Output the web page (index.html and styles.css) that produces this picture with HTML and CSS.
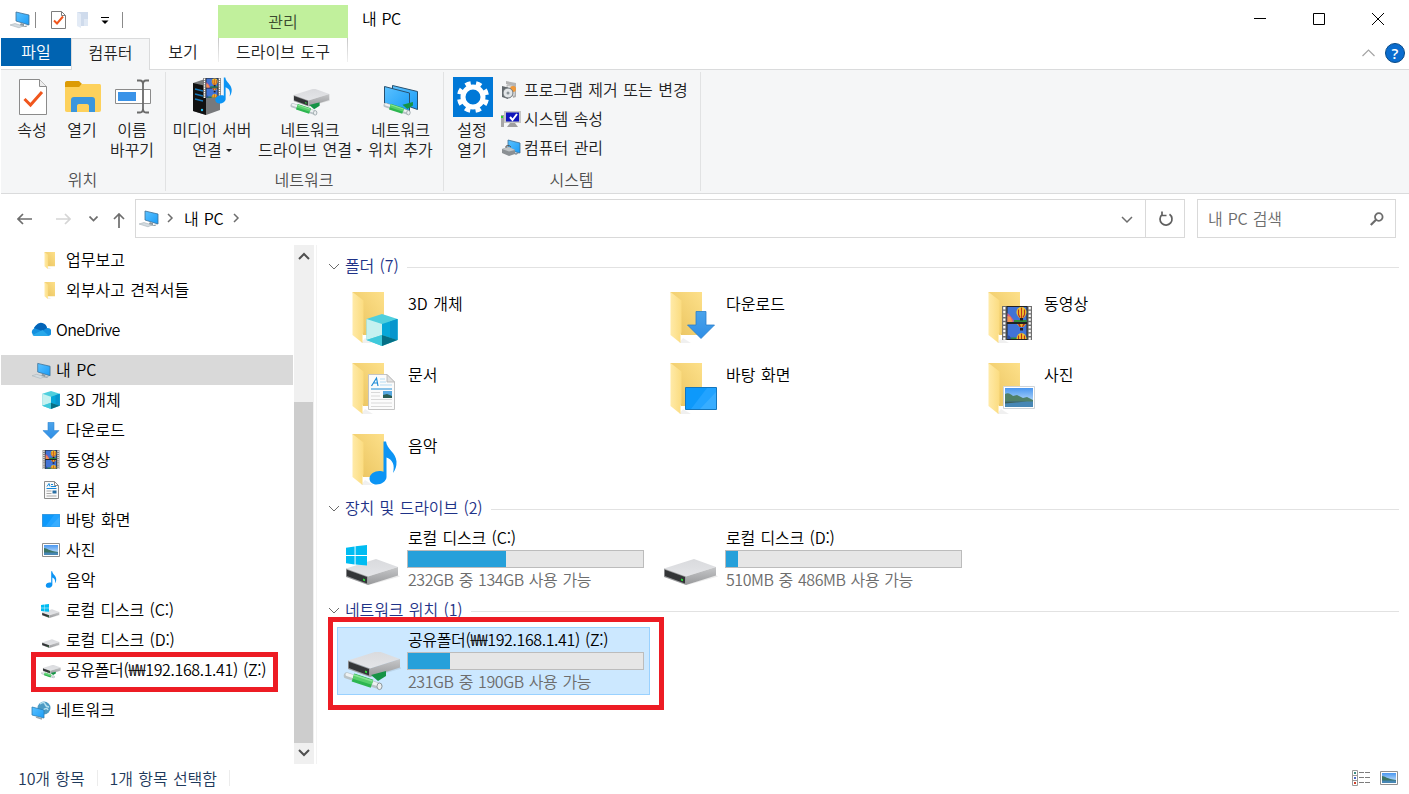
FILE: index.html
```html
<!DOCTYPE html>
<html lang="ko">
<head>
    <meta charset="UTF-8">
    <meta name="viewport" content="width=device-width, initial-scale=1.0">
    <title>내 PC</title>
    <link rel="stylesheet" href="styles.css">
</head>
<body>
    <!-- Icon sprite -->
    <svg class="sprite" width="0" height="0">
        <defs>
            <linearGradient id="g-folder" x1="0" y1="1" x2="1" y2="0">
                <stop offset="0" stop-color="#e9c25c"/><stop offset="1" stop-color="#fde08a"/>
            </linearGradient>
            <linearGradient id="g-flap" x1="0" y1="0" x2="1" y2="0">
                <stop offset="0" stop-color="#ffeaa8"/><stop offset="1" stop-color="#fbdc80"/>
            </linearGradient>
            <linearGradient id="g-screen" x1="0" y1="0" x2="1" y2="1">
                <stop offset="0" stop-color="#5cc2ff"/><stop offset="1" stop-color="#1a9cf7"/>
            </linearGradient>
            <linearGradient id="g-top" x1="0" y1="0" x2="0" y2="1">
                <stop offset="0" stop-color="#d9dadd"/><stop offset="1" stop-color="#e4e5e8"/>
            </linearGradient>
            <linearGradient id="g-side" x1="0" y1="0" x2="0" y2="1">
                <stop offset="0" stop-color="#c6c7c9"/><stop offset="1" stop-color="#98999b"/>
            </linearGradient>
            <linearGradient id="g-sky" x1="0" y1="0" x2="0" y2="1">
                <stop offset="0" stop-color="#4a97f0"/><stop offset="1" stop-color="#dcf0fb"/>
            </linearGradient>
            <linearGradient id="g-arrow" x1="0" y1="0" x2="0" y2="1">
                <stop offset="0" stop-color="#4aa3ea"/><stop offset="1" stop-color="#2f8ee6"/>
            </linearGradient>
        </defs>
        <symbol id="i-folder" viewBox="0 0 40 54">
            <path d="M9 51h12l-8-5z" fill="#000" opacity=".06"/>
            <path d="M.5 0H32v43H11z" fill="url(#g-folder)"/>
            <path d="M.5 0l11 8.500V40l-1 3v8L.5 43z" fill="url(#g-flap)"/>
        </symbol>
        <symbol id="i-cube" viewBox="0 0 32 32">
            <path d="M16 0l15.500 5v21L16 32 .5 26V5z" fill="#4fcfdd"/>
            <path d="M.5 5L16 10v11L.5 26z" fill="#c5f1f0"/>
            <path d="M16 10l15.500-5v21L16 21z" fill="#05a7d8"/>
            <path d="M24 7.500L31.500 5v21L24 23.500z" fill="#0795cd"/>
            <path d="M.5 26L16 21v11z" fill="#3fc9db"/>
            <path d="M16 21l15.500 5L16 32z" fill="#046f86"/>
        </symbol>
        <symbol id="i-down" viewBox="0 0 28 28">
            <path d="M9 .5h10V14h8.500L14 27.500.5 14H9z" fill="url(#g-arrow)" stroke="#2a7fcc" stroke-width=".8"/>
        </symbol>
        <symbol id="i-film" viewBox="0 0 30 34">
            <path d="M0 0h30v34H0z" fill="#6e6e6e"/>
            <path d="M2.300 1v33M27.700 1v33" stroke="#fff" stroke-width="2.200" stroke-dasharray="2.400 1.400"/>
            <path d="M4.500 0h21v34h-21z" fill="#222"/>
            <path d="M5.500 1h19v15h-19zM5.500 18h19v15h-19z" fill="#4173d6"/>
            <path d="M5.500 7l3 3 3 4v2h-6z" fill="#e0577c"/>
            <path d="M5.500 10l3 1 2 5h-5z" fill="#f0964e"/>
            <path d="M12 14h12.500v2H12zM5.500 31.500h19V33h-19z" fill="#2e8b3c"/>
            <path d="M14.500 6a5 5 0 0 1 10 0c0 3-2 5-3 6h-4c-1-1-3-3-3-6z" fill="#f4c92d"/>
            <path d="M16.500 3.500v5l1.500 3M19.500 1.500V12M22.500 3.500v5L21 11.500" fill="none" stroke="#b9311f" stroke-width="1.200"/>
            <path d="M18 12h3v2.500h-3z" fill="#201c22"/>
            <path d="M15 18h9l-2.500 3h-4z" fill="#e8b82a"/>
            <path d="M16 18h2l1 3h-1.500zM21 18h2l-2 3h-1z" fill="#b9311f"/>
            <path d="M18 22h3v2.500h-3z" fill="#201c22"/>
            <path d="M14.500 33a5 6 0 0 1 10 0z" fill="#f4c92d"/>
            <path d="M16.500 29.500V33M19.500 27.500V33M22.500 29.500V33" stroke="#b9311f" stroke-width="1.200"/>
            <path d="M5.500 29l2 1 2 3h-4z" fill="#2b4aa8"/>
        </symbol>
        <symbol id="i-doc" viewBox="0 0 27 36">
            <path d="M.5.5H19L26.500 8v27.500H.5z" fill="#fbfbfb" stroke="#c4c4c4"/>
            <path d="M19 .5V8h7.500z" fill="#e2e2e2" stroke="#b4b4b4" stroke-width=".8"/>
            <path d="M3.500 12L8.500 4l1.500 8M5 9h5M3 15h21" fill="none" stroke="#1f8bd6" stroke-width="1.200"/>
            <path d="M12 5h5M12 8h6M12 11h12" stroke="#b5dbf2"/>
            <path d="M3 18.500h9M3 22h9M3 25.500h21M3 29h21M3 32.500h21" stroke="#d9d9d9"/>
            <path d="M15 17h9v7h-9z" fill="#57a7df"/><path d="M15 21l4-1 5 2v2h-9z" fill="#2b5d54"/>
        </symbol>
        <symbol id="i-doc-sm" viewBox="0 0 15 18">
            <path d="M.5.5h10l4 4v13H.5z" fill="#fafafa" stroke="#8d8d8d"/>
            <path d="M10.500.5v4h4" fill="none" stroke="#8d8d8d"/>
            <path d="M3 5.500l2-3 1 3M7 3.500h2M7 5.500h5M2.500 7.500h10" fill="none" stroke="#1588d9"/>
            <path d="M2.500 10h5M2.500 12.500h5M2.500 15h10" stroke="#a9a9a9"/>
            <path d="M8.500 9.500h4v3h-4z" fill="#2b6fa3"/>
        </symbol>
        <symbol id="i-desktop" viewBox="0 0 32 23">
            <path d="M.5.5h31v22H.5z" fill="#0d99fb" stroke="#1476bd"/>
            <path d="M22 1h9v21H6z" fill="#22a3ff"/>
            <path d="M31 5v17H15z" fill="#38adff"/>
        </symbol>
        <symbol id="i-photo" viewBox="0 0 32 23">
            <path d="M.5.5h31v22H.5z" fill="#fff" stroke="#cfd4d8"/>
            <path d="M2 2h28v19H2z" fill="url(#g-sky)"/>
            <path d="M2 8c3-2 6 0 8 2l4-1 6 3 4-1 6 3v2H2z" fill="#4f8068"/>
            <path d="M2 15.500h28V21H2z" fill="#4787b5"/>
            <path d="M2 15.500h22l-22 2z" fill="#3b5f57"/>
        </symbol>
        <symbol id="i-photo-sm" viewBox="0 0 18 14">
            <path d="M.5.5h17v13H.5z" fill="#fff" stroke="#8f8f8f"/>
            <path d="M2 2h14v10H2z" fill="url(#g-sky)"/>
            <path d="M2 5c3 0 5 3 14 4v1H2z" fill="#3c7566"/>
            <path d="M2 9.500h14V12H2z" fill="#4787b5"/>
        </symbol>
        <symbol id="i-music" viewBox="0 0 28 44">
            <path d="M14.500.5H17c1 8 10 11 10.500 20 .2 5-1 8-3.500 11.500C26 24 24 19 17.500 16.500V36c0 4-5 7.500-10 7.500-4 0-7-2.500-7-6 0-5 6-8 11-7.500 1 0 2 .3 3 .7z" fill="#0c94f4"/>
        </symbol>
        <symbol id="i-drive" viewBox="0 0 54 28">
            <path d="M22 26.500l32-9-3-2z" fill="#000" opacity=".08"/>
            <path d="M0 9.500L30 0l22 8-30 9.500z" fill="url(#g-top)"/>
            <path d="M22 17.500L52 8v8.500L22 26z" fill="url(#g-side)"/>
            <path d="M0 9.500l22 8V26L0 18z" fill="#9a9b9d"/>
            <path d="M.8 10.800L21 18v6.500L.8 17z" fill="#333537"/>
            <path d="M17 19.500l2 .7v2l-2-.7z" fill="#2fdc3a"/>
        </symbol>
        <symbol id="i-winlogo" viewBox="0 0 22 22">
            <path d="M0 3l9-1.500V10.500H0zM10 1.300L22 0v10.500H10zM0 11.500h9v9L0 19.200zM10 11.500h12V21.500L10 20.500z" fill="#00bcf2"/>
        </symbol>
        <symbol id="i-pipe" viewBox="0 0 46 20">
            <path d="M28 4l15-4v5l-8 5z" fill="#159345"/>
            <path d="M4 4.500l32 10.500" stroke="#b9c3c7" stroke-width="6.500" stroke-linecap="round"/>
            <path d="M4 3.500l32 10.500" stroke="#eef2f3" stroke-width="3" stroke-linecap="round"/>
            <ellipse cx="36.500" cy="15.300" rx="2.500" ry="3.300" fill="#eceff0" stroke="#8e9a9f"/>
            <path d="M10 6.500l19 6.200" stroke="#2db650" stroke-width="8.500"/>
            <path d="M10.500 5.500l19 6.200" stroke="#58d06c" stroke-width="4.500"/>
            <path d="M11 4l18.500 6" stroke="#8be596" stroke-width="1.500"/>
        </symbol>
        <symbol id="i-netdrive" viewBox="0 0 58 40">
            <use href="#i-drive" x="5" y="-1" width="54" height="28"/>
            <use href="#i-pipe" x="0" y="19" width="46" height="20"/>
        </symbol>
        <symbol id="i-pc" viewBox="0 0 20 18">
            <path d="M6 1l13 3v10L6 10z" fill="url(#g-screen)" stroke="#3c6f95" stroke-width=".8"/>
            <path d="M11 12l3 1v2l4-.5-2 1.500-7-1z" fill="#8e9aa2"/>
            <path d="M0 14l5-1.500 8 2.500-4 1.800z" fill="#d3dbe0" stroke="#a7b2b9" stroke-width=".6"/>
        </symbol>
        <symbol id="i-check" viewBox="0 0 28 36">
            <path d="M.5.5h20l7 7v28H.5z" fill="#fff" stroke="#8b8b8b"/>
            <path d="M20.500.5v7h7" fill="#eee" stroke="#8b8b8b"/>
            <path d="M5.500 20l6 6L23 13" fill="none" stroke="#f0561d" stroke-width="3"/>
        </symbol>
        <symbol id="i-check-sm" viewBox="0 0 15 18">
            <path d="M.5.5h10l4 4v13H.5z" fill="#fff" stroke="#7d7d7d"/>
            <path d="M10.500.5v4h4" fill="none" stroke="#7d7d7d"/>
            <path d="M3 9.500l3 3 6-7" fill="none" stroke="#f0561d" stroke-width="2"/>
        </symbol>
        <symbol id="i-chev" viewBox="0 0 12 8">
            <path d="M1 1l5 5 5-5" fill="none" stroke="currentColor"/>
        </symbol>
    </svg>

    <div class="window">
        <header class="titlebar">
            <div class="quick-access">
                <svg class="qa-pc" width="20" height="18"><use href="#i-pc"/></svg>
                <span class="qa-sep"></span>
                <svg class="qa-check" width="15" height="18"><use href="#i-check-sm"/></svg>
                <svg class="qa-folder" width="13" height="18" viewBox="0 0 13 18"><path d="M1 1h11v14H4z" fill="#cfdbec"/><path d="M8 8h4v7H8z" fill="#dfe8f4"/><path d="M1 1l4 2v14l-4-2z" fill="#e3ebf6"/></svg>
                <svg class="qa-more" width="8" height="8" viewBox="0 0 8 8"><path d="M0 .5h8" stroke="#000"/><path d="M.5 3.500h7L4 7z"/></svg>
                <span class="qa-sep"></span>
            </div>
            <div class="context-title">관리</div>
            <h1 class="window-title">내 PC</h1>
            <div class="window-buttons">
                <svg width="12" height="12" viewBox="0 0 12 12"><path d="M0 5.500h12"/></svg>
                <svg width="12" height="12" viewBox="0 0 12 12"><path d="M.5.5h11v11H.5z"/></svg>
                <svg width="12" height="12" viewBox="0 0 12 12"><path d="M0 0l12 12M12 0L0 12"/></svg>
            </div>
        </header>

        <nav class="tabs">
            <a class="tab tab-file">파일</a>
            <a class="tab tab-active">컴퓨터</a>
            <a class="tab tab-view">보기</a>
            <a class="tab tab-context">드라이브 도구</a>
            <div class="tabs-end">
                <svg class="collapse" width="13" height="8" viewBox="0 0 13 8"><path d="M.5 7l6-6 6 6" fill="none" stroke="#a5a5a5" stroke-width="1.200"/></svg>
                <span class="help">?</span>
            </div>
        </nav>

        <section class="ribbon">
            <div class="group group-location">
                <div class="group-items">
                    <div class="big-btn">
                        <svg width="40" height="40" viewBox="0 0 40 40"><use href="#i-check" x="7" y="2" width="28" height="36"/></svg>
                        <span>속성</span>
                    </div>
                    <div class="big-btn">
                        <svg width="40" height="40" viewBox="0 0 40 40">
                            <path d="M3 6c0-1 .5-2 2-2h12l3 3-3 4H3z" fill="#dc9b05"/>
                            <path d="M3 10h14l3-3h17c1.500 0 2 .5 2 2v24c0 1-.5 2-2 2H5c-1.500 0-2-1-2-2z" fill="#fdd15c"/>
                            <path d="M9 35V23c0-2 1-3 3-3h18c2 0 3 1 3 3v12h-6v-6c0-1-.5-2-2-2h-8c-1.500 0-2 1-2 2v6z" fill="#3a96dd"/>
                        </svg>
                        <span>열기</span>
                    </div>
                    <div class="big-btn">
                        <svg width="40" height="40" viewBox="0 0 40 40">
                            <path d="M3.500 12.500h35v14h-35z" fill="#fff" stroke="#8b8b8b"/>
                            <path d="M6 15h18v9H6z" fill="#3a93e8"/>
                            <path d="M25 3.500h3q3 0 3 4v24q0 4-3 4h-3M37 3.500h-3q-3 0-3 4v24q0 4 3 4h3" fill="none" stroke="#6b6b6b" stroke-width="1.800"/>
                        </svg>
                        <span>이름<br>바꾸기</span>
                    </div>
                </div>
                <div class="group-name">위치</div>
            </div>
            <div class="group group-network">
                <div class="group-items">
                    <div class="big-btn">
                        <svg width="40" height="40" viewBox="0 0 40 40">
                            <path d="M1 6l12-4 15 3v28l-14 5L1 34z" fill="#77797c"/>
                            <path d="M1 6l13 3v29L1 34z" fill="#111"/>
                            <path d="M3 12l8 2M3 17l8 2M3 22l8 2" stroke="#1677b8" stroke-width="1.500"/>
                            <circle cx="10" cy="33" r="1.200" fill="#28c8ff"/>
                            <use href="#i-film" x="11" y="1" width="18" height="20"/>
                            <use href="#i-music" x="23" y="0" width="17" height="27"/>
                        </svg>
                        <span>미디어 서버<br>연결<i class="drop"></i></span>
                    </div>
                    <div class="big-btn">
                        <svg width="40" height="40" viewBox="0 0 40 40"><use href="#i-netdrive" x="0" y="12" width="40" height="28"/></svg>
                        <span>네트워크<br>드라이브 연결<i class="drop"></i></span>
                    </div>
                    <div class="big-btn">
                        <svg width="40" height="40" viewBox="0 0 40 40">
                            <path d="M11.500 8.500l25 6v18l-25-9z" fill="url(#g-screen)" stroke="#27506f"/>
                            <path d="M3.500 9.500l25 6.500v18l-25-8z" fill="url(#g-screen)" stroke="#27506f"/>
                            <use href="#i-pipe" x="2" y="25" width="32" height="14"/>
                        </svg>
                        <span>네트워크<br>위치 추가</span>
                    </div>
                </div>
                <div class="group-name">네트워크</div>
            </div>
            <div class="group group-system">
                <div class="group-items">
                    <div class="big-btn">
                        <svg width="40" height="40" viewBox="0 0 40 40">
                            <path d="M0 0h40v40H0z" fill="#0078d7"/>
                            <circle cx="20" cy="20" r="10" fill="none" stroke="#fff" stroke-width="5"/>
                            <circle cx="20" cy="20" r="13.800" fill="none" stroke="#fff" stroke-width="4.500" stroke-dasharray="5.400 5.438" stroke-dashoffset="-2.700"/>
                        </svg>
                        <span>설정<br>열기</span>
                    </div>
                    <ul class="small-btns">
                        <li>
                            <svg width="20" height="20" viewBox="0 0 20 20"><path d="M5 1l10 2v14l-3 1V6L5 4z" fill="#b5b5b5"/><path d="M6 5l8 2v9H6z" fill="#e9e9e9" stroke="#999" stroke-width=".6"/><circle cx="12" cy="9" r="3" fill="#f0993a"/><path d="M1 6l6 1.500V19l-6-2z" fill="#62686c"/><circle cx="7" cy="13" r="5" fill="#e3e6e8" stroke="#6c7478"/><circle cx="7" cy="13" r="1.500" fill="#8b9499"/></svg>
                            프로그램 제거 또는 변경
                        </li>
                        <li>
                            <svg width="20" height="20" viewBox="0 0 20 20"><path d="M0 6h3v12H0z" fill="#a7a7a7"/><path d="M0 7h2v2H0z" fill="#2bd32b"/><path d="M3 2h17v12H3z" fill="#c6c6c6"/><path d="M5 3.500h13v9H5z" fill="#1016bb"/><path d="M9 8l2.500 3L16 5" fill="none" stroke="#fff" stroke-width="2"/><path d="M9 14h5l3 4H6z" fill="#9f9f9f"/></svg>
                            시스템 속성
                        </li>
                        <li>
                            <svg width="20" height="20" viewBox="0 0 20 20"><path d="M7 2l12 3v10L7 12z" fill="url(#g-screen)" stroke="#3c6f95" stroke-width=".8"/><path d="M12 15h6l-3 2z" fill="#8e9aa2"/><path d="M1 11l7-2 6 3v4l-6 2-7-3z" fill="#8b9094"/><path d="M1 11l7-2 6 3-6 1.500z" fill="#bfc4c7"/><path d="M5 10V8l3-.5L10 9" fill="none" stroke="#555"/></svg>
                            컴퓨터 관리
                        </li>
                    </ul>
                </div>
                <div class="group-name">시스템</div>
            </div>
        </section>

        <div class="addressbar">
            <div class="nav-arrows">
                <svg width="15" height="12" viewBox="0 0 15 12"><path d="M15 6H1M6 1L1 6l5 5"/></svg>
                <svg class="off" width="15" height="12" viewBox="0 0 15 12"><path d="M0 6h14M9 1l5 5-5 5"/></svg>
                <svg class="recent" width="9" height="6" viewBox="0 0 9 6"><path d="M.5.5l4 4 4-4"/></svg>
                <svg class="up" width="12" height="15" viewBox="0 0 12 15"><path d="M6 15V1M1 6l5-5 5 5"/></svg>
            </div>
            <div class="path">
                <svg width="20" height="18"><use href="#i-pc"/></svg>
                <svg class="crumb" width="7" height="10" viewBox="0 0 7 10"><path d="M1 1l4 4-4 4"/></svg>
                <span>내 PC</span>
                <svg class="crumb" width="7" height="10" viewBox="0 0 7 10"><path d="M1 1l4 4-4 4"/></svg>
                <svg class="path-drop" width="12" height="8" viewBox="0 0 12 8"><path d="M1 1l5 5 5-5"/></svg>
            </div>
            <div class="refresh">
                <svg width="16" height="16" viewBox="0 0 16 16"><path d="M11.500 3.200A6 6 0 1 1 4 3.600M4 .5v4h4.500" fill="none" stroke="#5f5f5f" stroke-width="1.700"/></svg>
            </div>
            <div class="search">
                <span>내 PC 검색</span>
                <svg width="14" height="14" viewBox="0 0 14 14"><circle cx="8.800" cy="5" r="3.800" fill="none" stroke="#6c6c6c" stroke-width="1.800"/><path d="M6 7.800L.8 13" stroke="#6c6c6c" stroke-width="2.200"/></svg>
            </div>
        </div>

        <main class="body">
            <aside class="sidebar">
                <ul class="tree">
                    <li class="sub"><svg viewBox="0 0 20 20"><use href="#i-folder" x="3" y="2" width="14" height="18"/></svg><span>업무보고</span></li>
                    <li class="sub"><svg viewBox="0 0 20 20"><use href="#i-folder" x="3" y="2" width="14" height="18"/></svg><span>외부사고 견적서들</span></li>
                    <li class="root"><svg viewBox="0 0 20 20"><path d="M4 16a4 4 0 0 1-1-7.500A5 5 0 0 1 9 4.500 6 6 0 0 1 16 8a4 4 0 0 1 1 8z" fill="#1490df"/><path d="M5 5.500A6 6 0 0 1 16 8l-5 3-8-3z" fill="#0364b8"/><path d="M1.500 15l10-5 6 5.500-1 .5H4q-1.500 0-2.500-1z" fill="#28a8ea"/></svg><span class="latin">OneDrive</span></li>
                    <li class="root selected"><svg viewBox="0 0 20 20"><use href="#i-pc" x="1" y="2" width="19" height="18"/></svg><span>내 PC</span></li>
                    <li class="sub"><svg viewBox="0 0 20 20"><use href="#i-cube" x="1" y="1" width="18" height="18"/></svg><span>3D 개체</span></li>
                    <li class="sub"><svg viewBox="0 0 20 20"><use href="#i-down" x="1.500" y="2" width="17" height="17"/></svg><span>다운로드</span></li>
                    <li class="sub"><svg viewBox="0 0 20 20"><use href="#i-film" x="1" y="0" width="18" height="19" /></svg><span>동영상</span></li>
                    <li class="sub"><svg viewBox="0 0 20 20"><use href="#i-doc-sm" x="3" y="1" width="15" height="18"/></svg><span>문서</span></li>
                    <li class="sub"><svg viewBox="0 0 20 20"><use href="#i-desktop" x="1" y="4" width="18" height="13"/></svg><span>바탕 화면</span></li>
                    <li class="sub"><svg viewBox="0 0 20 20"><use href="#i-photo-sm" x="1" y="3" width="18" height="14"/></svg><span>사진</span></li>
                    <li class="sub"><svg viewBox="0 0 20 20"><use href="#i-music" x="4" y="1" width="12" height="17"/></svg><span>음악</span></li>
                    <li class="sub"><svg viewBox="0 0 20 20"><use href="#i-drive" x="1" y="9" width="18" height="10"/><use href="#i-winlogo" x="0" y="4" width="8" height="8"/></svg><span class="disk">로컬 디스크 (C:)</span></li>
                    <li class="sub"><svg viewBox="0 0 20 20"><use href="#i-drive" x="1" y="9" width="18" height="10"/></svg><span class="disk">로컬 디스크 (D:)</span></li>
                    <li class="sub marked"><svg viewBox="0 0 20 20"><use href="#i-netdrive" x="0" y="5" width="20" height="14"/></svg><span class="share">공유폴더(₩₩192.168.1.41) (Z:)</span></li>
                    <li class="root"><svg viewBox="0 0 20 20"><circle cx="13" cy="8" r="6.500" fill="#4d9bc4"/><path d="M9 4q4-3 5 0t4 3M12 10q4-3 5 0" fill="none" stroke="#b5e0ef" stroke-width="1.500"/><path d="M1 7l12 3v8L1 15z" fill="url(#g-screen)" stroke="#2b7fb5" stroke-width=".8"/><path d="M5 17l6 2" stroke="#9aa6ad" stroke-width="1.500"/></svg><span>네트워크</span></li>
                </ul>
                <div class="scrollbar">
                    <svg class="flip" width="12" height="8"><use href="#i-chev"/></svg>
                    <div class="thumb"></div>
                    <svg width="12" height="8"><use href="#i-chev"/></svg>
                </div>
            </aside>

            <section class="content">
                <h2 class="section-title"><svg width="12" height="8"><use href="#i-chev"/></svg>폴더 (7)</h2>
                <div class="tiles folders">
                    <div class="tile"><svg viewBox="0 0 71 68"><use href="#i-folder" x="15" y="2" width="40" height="54"/><use href="#i-cube" x="29" y="24" width="32" height="32"/></svg><span>3D 개체</span></div>
                    <div class="tile"><svg viewBox="0 0 71 68"><use href="#i-folder" x="15" y="2" width="40" height="54"/><use href="#i-down" x="32" y="21" width="28" height="28"/></svg><span>다운로드</span></div>
                    <div class="tile"><svg viewBox="0 0 71 68"><use href="#i-folder" x="15" y="2" width="40" height="54"/><use href="#i-film" x="29" y="16" width="30" height="34"/></svg><span>동영상</span></div>
                    <div class="tile"><svg viewBox="0 0 71 68"><use href="#i-folder" x="15" y="2" width="40" height="54"/><use href="#i-doc" x="31" y="13" width="27" height="36"/></svg><span>문서</span></div>
                    <div class="tile"><svg viewBox="0 0 71 68"><use href="#i-folder" x="15" y="2" width="40" height="54"/><use href="#i-desktop" x="30" y="26" width="32" height="23"/></svg><span>바탕 화면</span></div>
                    <div class="tile"><svg viewBox="0 0 71 68"><use href="#i-folder" x="15" y="2" width="40" height="54"/><use href="#i-photo" x="30" y="25" width="32" height="23"/></svg><span>사진</span></div>
                    <div class="tile"><svg viewBox="0 0 71 68"><use href="#i-folder" x="15" y="2" width="40" height="54"/><use href="#i-music" x="32" y="9" width="28" height="44"/></svg><span>음악</span></div>
                </div>

                <h2 class="section-title"><svg width="12" height="8"><use href="#i-chev"/></svg>장치 및 드라이브 (2)</h2>
                <div class="tiles">
                    <div class="tile">
                        <svg viewBox="0 0 71 68"><use href="#i-drive" x="9" y="34" width="54" height="28"/><use href="#i-winlogo" x="9" y="20" width="21" height="21"/></svg>
                        <div class="drive">
                            <span class="disk">로컬 디스크 (C:)</span>
                            <div class="meter"><div style="width: 41.800%"></div></div>
                            <small>232GB 중 134GB 사용 가능</small>
                        </div>
                    </div>
                    <div class="tile">
                        <svg viewBox="0 0 71 68"><use href="#i-drive" x="9" y="34" width="54" height="28"/></svg>
                        <div class="drive">
                            <span class="disk">로컬 디스크 (D:)</span>
                            <div class="meter"><div style="width: 5%"></div></div>
                            <small>510MB 중 486MB 사용 가능</small>
                        </div>
                    </div>
                </div>

                <h2 class="section-title">
                    <svg width="12" height="8"><use href="#i-chev"/></svg>네트워크 위치 (1)
                </h2>
                <div class="tiles">
                    <div class="tile selected marked">
                        <svg viewBox="0 0 71 68"><use href="#i-netdrive" x="6" y="25" width="58" height="40"/></svg>
                        <div class="drive">
                            <span class="share">공유폴더(₩₩192.168.1.41) (Z:)</span>
                            <div class="meter"><div style="width: 18%"></div></div>
                            <small>231GB 중 190GB 사용 가능</small>
                        </div>
                    </div>
                </div>
            </section>
        </main>

        <footer class="statusbar">
            <span>10개 항목</span>
            <span>1개 항목 선택함</span>
            <div class="view-modes">
                <svg width="18" height="16" viewBox="0 0 18 16"><path d="M.5.500h5v15h-5zM.5 5.500h5M.5 10.500h5" fill="none" stroke="#9a9a9a"/><path d="M2 2h2v2H2z" fill="#3d8c84"/><path d="M2 7h2v2H2z" fill="#4b66c4"/><path d="M2 12h2v2H2z" fill="#d0402b"/><path d="M7 2.500h5M13 2.500h5M7 7.500h5M13 7.500h5M7 12.500h5M13 12.500h5" stroke="#7d7d7d"/></svg>
                <svg width="18" height="14"><use href="#i-photo-sm"/></svg>
            </div>
        </footer>
    </div>
</body>
</html>
```
FILE: styles.css
```css
*,
*::after {
    margin: 0;
    padding: 0;
    box-sizing: border-box;
}

body {
    font-family: 'Noto Sans CJK KR', sans-serif;
    font-size: 16px;
    font-weight: 350;
    line-height: 20px;
    word-spacing: 1px;
    color: #000;
    background: #fff;
    overflow: hidden;
}

ul {
    list-style: none;
}

svg {
    display: block;
    flex: none;
}

.sprite {
    position: absolute;
}

.window {
    display: flex;
    flex-direction: column;
    width: 1409px;
    height: 794px;
    padding-left: 1px;
    white-space: nowrap;
}

/* Title bar */
.titlebar {
    display: flex;
    height: 38px;
}

.quick-access {
    display: flex;
    align-items: center;
    width: 217px;
    padding: 1px 0 0 9px;
}

.qa-sep {
    width: 1px;
    height: 16px;
    margin-left: 5px;
    background: #8a8a8a;
}

.qa-check {
    margin-left: 15px;
}

.qa-folder {
    margin-left: 10px;
}

.qa-more {
    margin: 2px 12px 0;
}

.qa-more + .qa-sep {
    margin-left: 1px;
}

.context-title {
    width: 130px;
    margin-top: 5px;
    background: #c1f09c;
    color: #3b4a2f;
    text-align: center;
    line-height: 32px;
}

.window-title {
    margin-left: 14px;
    font-size: 16px;
    font-weight: 350;
    letter-spacing: -.4px;
    line-height: 37px;
}

.window-buttons {
    display: flex;
    align-items: center;
    gap: 47px;
    margin-left: auto;
    padding-right: 25px;
}

.window-buttons path {
    fill: none;
    stroke: #000;
}

/* Ribbon tabs */
.tabs {
    display: flex;
    height: 32px;
    border-bottom: 1px solid #dadbdc;
}

.tab {
    text-align: center;
    line-height: 26px;
    color: #222;
}

.tab-file {
    width: 70px;
    height: 28px;
    background: #0063b1;
    color: #fff;
}

.tab-active {
    width: 79px;
    height: 32px;
    border: 1px solid #dadbdc;
    border-bottom: 0;
    background: #f5f6f7;
}

.tab-view {
    width: 68px;
    padding-right: 2px;
}

.tab-context {
    width: 130px;
    height: 24px;
    border: solid;
    border-width: 0 1px;
    border-image: linear-gradient(#c4c4c4, #f2f2f2) 1;
}

.tabs-end {
    display: flex;
    align-items: center;
    margin-left: auto;
    padding: 0 4px 2px 0;
    gap: 10px;
}

.help {
    width: 20px;
    height: 20px;
    border: 1px solid #084a86;
    border-radius: 50%;
    background: #0a6cce;
    color: #fff;
    font: 600 15px/18px 'Open Sans', sans-serif;
    text-align: center;
}

/* Ribbon */
.ribbon {
    display: flex;
    height: 124px;
    padding-top: 2px;
    background: #f5f6f7;
    border-bottom: 1px solid #dadbdc;
    color: #222;
}

.group {
    height: 119px;
    padding-top: 5px;
    border-right: 1px solid #e1e2e3;
}

.group-location {
    width: 165px;
}

.group-network {
    width: 278px;
}

.group-system {
    width: 257px;
}

.group-items {
    display: flex;
    height: 92px;
}

.big-btn {
    display: flex;
    flex-direction: column;
    align-items: center;
    gap: 2px;
    width: 50px;
    text-align: center;
}

.group-location .big-btn:first-child {
    margin-left: 6px;
}

.group-network .big-btn:first-child {
    width: 92px;
}

.group-network .big-btn:nth-child(2) {
    width: 104px;
}

.group-network .big-btn:nth-child(3) {
    width: 77px;
}

.group-system .big-btn {
    margin-left: 4px;
}

.group-system .big-btn span {
    margin-right: 2px;
}

.drop {
    display: inline-block;
    margin-left: 4px;
    vertical-align: 4px;
    border: 3.500px solid transparent;
    border-top-color: #222;
    border-bottom: 0;
}

.small-btns {
    margin: -3px 0 0 3px;
}

.small-btns li {
    display: flex;
    align-items: center;
    gap: 3px;
    height: 29px;
}

.small-btns svg {
    margin-top: 2px;
}

.group-name {
    padding-right: 1px;
    text-align: center;
    color: #4f4f4f;
}

/* Address bar */
.addressbar {
    display: flex;
    height: 51px;
    padding-top: 5px;
}

.addressbar path {
    fill: none;
}

.nav-arrows {
    display: flex;
    align-items: center;
    width: 134px;
    height: 40px;
    padding-left: 16px;
}

.nav-arrows path {
    stroke: #6d6d6d;
    stroke-width: 1.700;
}

.nav-arrows .off {
    margin-left: 24px;
}

.nav-arrows .off path {
    stroke: #d5d5d5;
}

.nav-arrows .recent {
    margin-left: 18px;
}

.nav-arrows .up {
    margin: 2px 0 0 15px;
}

.path {
    display: flex;
    align-items: center;
    width: 1011px;
    height: 39px;
    padding-left: 3px;
    border: 1px solid #d9d9d9;
}

.path span,
.search span {
    padding-bottom: 2px;
    letter-spacing: -.2px;
}

.crumb {
    margin: 0 10px 2px 8px;
}

.path span + .crumb {
    margin-left: 9px;
}

.crumb path,
.path-drop path {
    stroke: #6d6d6d;
    stroke-width: 1.500;
}

.path-drop {
    margin: 3px 12px 0 auto;
}

.refresh {
    display: flex;
    align-items: center;
    justify-content: center;
    width: 39px;
    height: 39px;
    padding-left: 2px;
    border: 1px solid #d9d9d9;
    border-left: 0;
}

.search {
    display: flex;
    align-items: center;
    justify-content: space-between;
    width: 199px;
    height: 39px;
    margin-left: 12px;
    padding: 0 11px 0 10px;
    border: 1px solid #d9d9d9;
    color: #6d6d6d;
}

/* Sidebar */
.body {
    display: flex;
    height: 519px;
}

.sidebar {
    display: flex;
    width: 316px;
    border-right: 1px solid #f3f3f3;
}

.tree {
    width: 292px;
    margin-right: 1px;
}

.tree li {
    display: flex;
    align-items: center;
    position: relative;
    height: 30px;
}

.tree svg {
    width: 20px;
    height: 20px;
    margin-right: 5px;
}

.tree span {
    padding-bottom: 2px;
}

.tree .sub {
    padding-left: 40px;
}

.tree .root {
    margin: 10px 0 0;
    padding-left: 30px;
}

.tree .selected {
    background: #d9d9d9;
}

.tree .latin {
    letter-spacing: -.6px;
}

.disk {
    letter-spacing: -.15px;
}

.share {
    letter-spacing: -.36px;
}

.scrollbar {
    display: flex;
    flex-direction: column;
    align-items: center;
    width: 20px;
    padding: 7px 0;
    background: #f0f0f0;
    color: #505050;
}

.scrollbar svg {
    margin-right: 1px;
    stroke-width: 2;
}

.flip {
    transform: scaleY(-1);
}

.thumb {
    width: 19px;
    height: 341px;
    margin: auto 1px 6px 0;
    background: #cdcdcd;
}

/* File list */
.content {
    flex: 1;
    padding: 11px 10px 0 11px;
}

.section-title {
    display: flex;
    align-items: center;
    height: 22px;
    padding-bottom: 4px;
    font-size: 16px;
    font-weight: 350;
    letter-spacing: -.1px;
    color: #1e3287;
}

.section-title svg {
    margin: 4px 5px 0 0;
    color: #6b6b6b;
}

.section-title::after {
    content: '';
    flex: 1;
    height: 1px;
    margin: 4px 0 0 8px;
    background: #e2e2e2;
}

.tiles {
    display: grid;
    grid-template-columns: repeat(3, 313px);
    gap: 3px 5px;
    padding: 5px 9px 7px;
}

.folders {
    padding: 12px 9px 0;
    margin-bottom: -2px;
}

.tile {
    display: flex;
    position: relative;
    height: 68px;
}

.tile > svg {
    width: 71px;
    height: 68px;
}

.tile > span {
    padding-top: 3px;
}

.tile.selected {
    background: #cce8ff;
    box-shadow: inset 0 0 0 1px #99d1ff;
}

.drive {
    display: flex;
    flex-direction: column;
    width: 236px;
    padding-top: 2px;
}

.drive span {
    line-height: 21px;
}

.meter {
    width: 237px;
    height: 18px;
    margin: 2px 0 1px -1px;
    border: 1px solid #bcbcbc;
    background: #e6e6e6;
}

.meter div {
    height: 16px;
    background: #26a0da;
}

.drive small {
    font-size: 16px;
    letter-spacing: -.42px;
    color: #6d6d6d;
}

/* Red frames around the shared drive */
.marked::after {
    content: '';
    position: absolute;
    border: 5px solid #ed1c24;
}

.tree .marked::after {
    left: 30px;
    top: -3px;
    width: 247px;
    height: 40px;
}

.tile.marked::after {
    left: -9px;
    top: -10px;
    width: 336px;
    height: 93px;
}

/* Status bar */
.statusbar {
    display: flex;
    align-items: center;
    height: 30px;
    padding: 0 11px 2px 17px;
    letter-spacing: -.1px;
    color: #1e395b;
}

.statusbar span {
    padding-right: 12px;
    margin-right: 12px;
    border-right: 1px solid #ececec;
    line-height: 16px;
}

.view-modes {
    display: flex;
    align-items: center;
    gap: 10px;
    margin-left: auto;
}
```
